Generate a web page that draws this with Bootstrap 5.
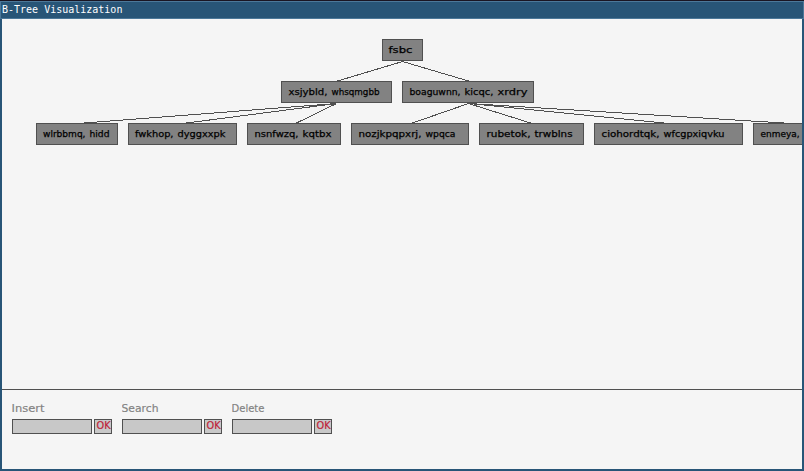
<!DOCTYPE html>
<html lang="en">
<head>
<meta charset="utf-8">
<title>B-Tree Visualization</title>
<link href="https://cdn.jsdelivr.net/npm/bootstrap@5.3.0/dist/css/bootstrap.min.css" rel="stylesheet">
<style>
body{height:471px;background:#f5f5f5;font-family:"DejaVu Sans",sans-serif}
.win{height:471px;background:#285577;border-top:1px solid #1a1522}
.titlebar{height:18px;border:1px solid #4c7899;padding-left:1px;font:10px/15px "DejaVu Sans Mono",monospace;color:#fff}
.client{margin:0 2px 2px;background:#f5f5f5}
.tree{height:370px}
.tree svg,.cap svg,.ok svg{display:block}
.tree rect{fill:#828282;stroke:#505050}
.tree line{stroke:#505050;shape-rendering:crispEdges}
.tree text{fill:#000;stroke:#000;stroke-width:.25px;font-size:9.5px}
.controls{border-top:1px solid #505050;padding:14px 10px 0;gap:10px}
.cap text{fill:#828282;stroke:#828282;stroke-width:.15px;font-size:9.7px}
.cap{height:15px}
.field{width:80px;height:15px;background:#c8c8c8;border:1px solid #505050;border-radius:0;outline:0;font-size:9px}
.ok{width:18px;height:15px;background:#c8c8c8;border:1px solid #505050;border-radius:0}
.ok text{fill:#be2137;stroke:#be2137;stroke-width:.2px;font-size:9.7px}
</style>
<script src="https://cdn.jsdelivr.net/npm/bootstrap@5.3.0/dist/js/bootstrap.bundle.min.js"></script>
</head>
<body class="m-0 overflow-hidden">
<div class="win d-flex flex-column">
  <header class="titlebar flex-shrink-0">B-Tree Visualization</header>
  <main class="client flex-grow-1 d-flex flex-column overflow-hidden">
    <div class="tree flex-shrink-0 overflow-hidden">
      <svg id="tree" width="800" height="370" viewBox="2 19 800 370"></svg>
    </div>
    <div class="controls d-flex flex-grow-1" id="controls"></div>
  </main>
</div>
<script>
// Each node: left, right, top, then words as [text, start, end]
const nodes = [
  [382,423,39,[["fsbc",389,412]]],
  [281,392,81,[["xsjybld,",289,327],["whsqmgbb",332,379]]],
  [402,534,81,[["boaguwnn,",410,460],["kicqc,",465,493],["xrdry",498,527]]],
  [36,118,123,[["wlrbbmq,",43.5,85],["hidd",90,109]]],
  [128,237,123,[["fwkhop,",135.5,173],["dyggxxpk",178,225]]],
  [247,341,123,[["nsnfwzq,",255,298],["kqtbx",303,331]]],
  [351,469,123,[["nozjkpqpxrj,",359,421],["wpqca",426,455]]],
  [479,584,123,[["rubetok,",487,530],["trwblns",535,572]]],
  [594,743,123,[["ciohordtqk,",602,659],["wfcgpxiqvku",664,724]]],
  [753,850,123,[["enmeya,",761,799]]]
];
const edges = [[402,61,337,81],[402,61,468,81],
  [336,103,84,123],[336,103,186,123],[336,103,296,123],
  [468,103,412,123],[468,103,530,123],[468,103,663,123],[468,103,783,123]];
let s = edges.map(e => `<line x1="${e[0]+.5}" y1="${e[1]+.5}" x2="${e[2]+.5}" y2="${e[3]}"/>`).join('');
for (const [l, r, t, words] of nodes) {
  s += `<rect x="${l+.5}" y="${t+.5}" width="${r-l-1}" height="21"/>`;
  for (const [w, a, b] of words) s += `<text x="${a-.5}" y="${t+14}" textLength="${b-a+1}" lengthAdjust="spacingAndGlyphs">${w}</text>`;
}
document.getElementById('tree').innerHTML = s;
document.getElementById('controls').innerHTML = [["Insert",32],["Search",36],["Delete",32]].map(([n, w]) => `
  <div>
    <div class="cap"><svg width="100" height="14"><text x="-.5" y="8" textLength="${w+1}" lengthAdjust="spacingAndGlyphs">${n}</text></svg></div>
    <div class="d-flex justify-content-between">
      <input class="field p-0" aria-label="${n}">
      <button class="ok p-0" aria-label="${n} OK"><svg width="16" height="13"><text x="1.5" y="9" textLength="14" lengthAdjust="spacingAndGlyphs">OK</text></svg></button>
    </div>
  </div>`).join('');
</script>
</body>
</html>
